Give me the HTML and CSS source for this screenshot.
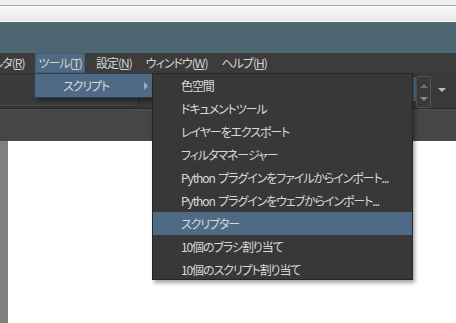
FILE: index.html
```html
<!DOCTYPE html>
<html lang="ja">

<head>
    <meta charset="UTF-8">
    <meta name="viewport" content="width=device-width, initial-scale=1.0">
    <title>Krita - ツール メニュー</title>
    <link rel="stylesheet" href="styles.css">
</head>

<body>
    <div class="window">
        <div class="chrome"></div>
        <div class="titlebar"></div>

        <nav class="menubar">
            <span class="menubar-item first">フィルタ(<u>R</u>)</span>
            <span class="menubar-item active">ツール(<u>T</u>)</span>
            <span class="menubar-item">設定(<u>N</u>)</span>
            <span class="menubar-item">ウィンドウ(<u>W</u>)</span>
            <span class="menubar-item">ヘルプ(<u>H</u>)</span>
        </nav>

        <div class="toolbar">
            <div class="preset-box"></div>
            <div class="toolbar-spacer"></div>
            <div class="slider"><div class="slider-fill"></div></div>
            <div class="spin">
                <span class="spin-up"></span>
                <span class="spin-down"></span>
            </div>
            <div class="drop-arrow"></div>
        </div>

        <div class="dockbar"></div>

        <div class="workspace">
            <div class="ruler"></div>
            <div class="canvas"></div>
        </div>

        <!-- ツール menu -->
        <div class="menu tools-menu">
            <div class="menu-item selected">
                <span>スクリプト</span>
                <span class="submenu-arrow"></span>
            </div>
        </div>

        <!-- スクリプト submenu -->
        <div class="menu scripts-menu">
            <div class="menu-item">色空間</div>
            <div class="menu-item">ドキュメントツール</div>
            <div class="menu-item">レイヤーをエクスポート</div>
            <div class="menu-item">フィルタマネージャー</div>
            <div class="menu-item">Python プラグインをファイルからインポート...</div>
            <div class="menu-item">Python プラグインをウェブからインポート...</div>
            <div class="menu-item selected">スクリプター</div>
            <div class="menu-item">10個のブラシ割り当て</div>
            <div class="menu-item">10個のスクリプト割り当て</div>
        </div>
    </div>
</body>

</html>
```

FILE: styles.css
```css
body {
    margin: 0;
    padding: 0;
    font-family: "Noto Sans CJK JP", "Noto Sans", sans-serif;
    font-size: 12px;
    font-feature-settings: "palt";
    background-color: #fff;
}

.window {
    position: relative;
    width: 456px;
    height: 323px;
    overflow: hidden;
    display: flex;
    flex-direction: column;
}

.chrome {
    height: 16px;
    border-top: 5px solid #f0f0f0;
    border-bottom: 1px solid transparent;
    box-shadow: inset 0 1px 0 #a9a9a9;
    background: linear-gradient(#fbfbfb, #e9e9e9);
}

.titlebar {
    height: 31px;
    background-color: #4e6572;
}

.menubar {
    height: 20px;
    display: flex;
    align-items: stretch;
    background-color: #3c3c3c;
    color: #d4d4d4;
    line-height: 20px;
    white-space: nowrap;
}

.menubar-item {
    padding: 0 3px 0 4px;
    margin-right: 7px;
    letter-spacing: -1px;
}

.menubar-item.first {
    margin-left: -29px;
}

.menubar-item.active {
    background-color: #4f6a84;
    box-shadow: inset 0 0 0 1px #45607a;
}

.toolbar {
    height: 35px;
    display: flex;
    align-items: flex-start;
    background-color: #393939;
    border-bottom: 1px solid #2a2a2a;
}

.preset-box {
    width: 138px;
    height: 31px;
    margin-top: 1px;
    background-color: #3b3b3b;
    border: 1px solid #2c2c2c;
    border-left: none;
    border-radius: 0 0 4px 0;
    box-shadow: inset 0 -1px 0 #4a4a4a;
}

.toolbar-spacer {
    flex: 1;
}

.slider {
    width: 40px;
    height: 24px;
    margin-top: 4px;
    background-color: #333;
    display: flex;
    justify-content: flex-end;
}

.slider-fill {
    width: 3px;
    background-color: #4f6a84;
}

.spin {
    width: 13px;
    height: 26px;
    margin-top: 3px;
    border: 1px solid #555;
    border-radius: 3px;
    background-color: #3a3a3a;
    display: flex;
    flex-direction: column;
    align-items: center;
    justify-content: space-around;
    padding: 2px 0;
    box-sizing: content-box;
}

.spin-up,
.spin-down {
    width: 0;
    height: 0;
    border-left: 4px solid transparent;
    border-right: 4px solid transparent;
}

.spin-up {
    border-bottom: 4px solid #6e6e6e;
}

.spin-down {
    border-top: 4px solid #8a8a8a;
}

.drop-arrow {
    width: 0;
    height: 0;
    margin: 15px 10px 0 7px;
    border-left: 4px solid transparent;
    border-right: 4px solid transparent;
    border-top: 4px solid #bdbdbd;
}

.dockbar {
    height: 31px;
    background-color: #464646;
    border-top: 1px solid #505050;
}

.workspace {
    flex: 1;
    display: flex;
}

.ruler {
    width: 8px;
    background-color: #808080;
}

.canvas {
    flex: 1;
    background-color: #fff;
}

/* popup menus */
.menu {
    position: absolute;
    background-color: #383838;
    color: #d8d8d8;
    border: 1px solid #262626;
    box-shadow: 2px 3px 4px rgba(0, 0, 0, 0.35);
    white-space: nowrap;
}

.menu-item {
    height: 23px;
    line-height: 23px;
    padding-left: 28px;
    letter-spacing: -1.1px;
    word-spacing: 2px;
}

.menu-item.selected {
    background-color: #4f6a84;
}

.tools-menu {
    left: 34px;
    top: 73px;
    width: 118px;
    border-color: #2f3e4c;
}

.tools-menu .menu-item {
    display: flex;
    justify-content: space-between;
    align-items: center;
    padding-right: 5px;
}

.submenu-arrow {
    width: 0;
    height: 0;
    border-top: 4px solid transparent;
    border-bottom: 4px solid transparent;
    border-left: 4px solid #9aa9b8;
}

.scripts-menu {
    left: 152px;
    top: 73px;
    width: 259px;
    height: 205px;
    padding-top: 0;
}
```
